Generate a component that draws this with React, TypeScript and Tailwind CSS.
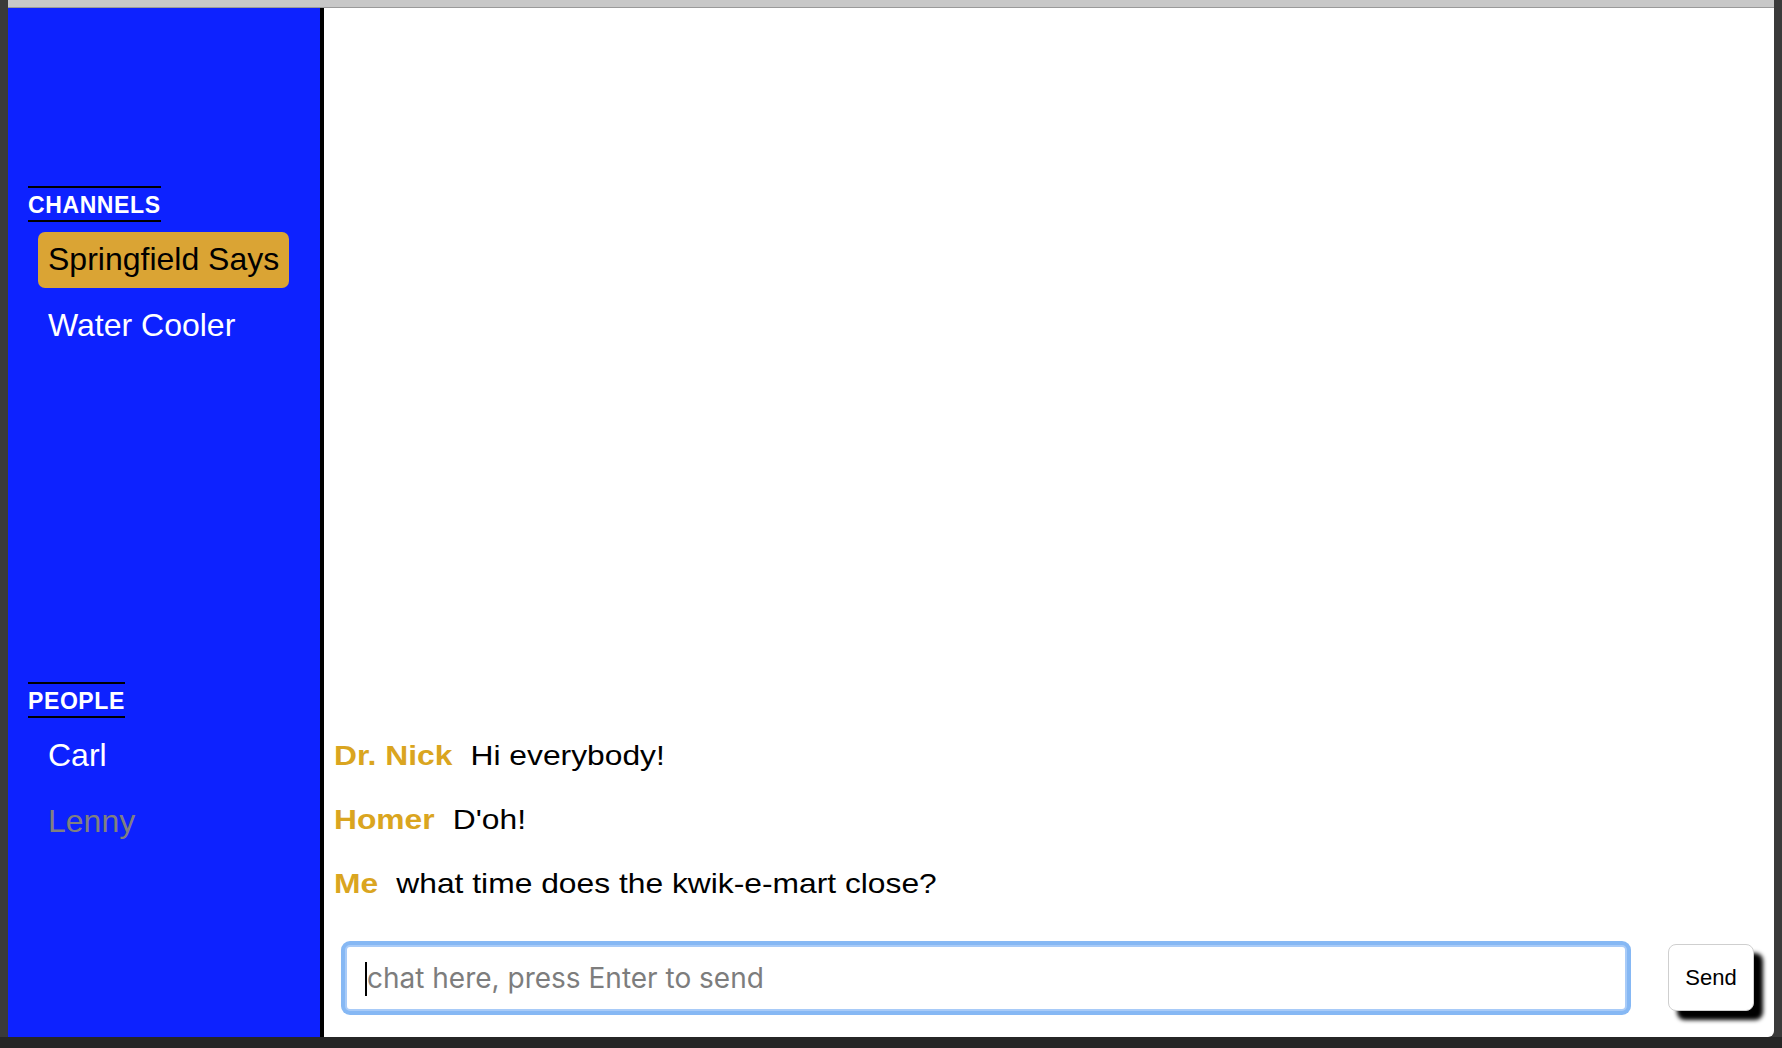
import React from 'react';

const channels = [
  { name: 'Springfield Says', active: true },
  { name: 'Water Cooler', active: false },
];

const people = [
  { name: 'Carl', online: true },
  { name: 'Lenny', online: false },
];

const messages = [
  { from: 'Dr. Nick', text: 'Hi everybody!' },
  { from: 'Homer', text: "D'oh!" },
  { from: 'Me', text: 'what time does the kwik-e-mart close?' },
];

function SectionHeading({ label }: { label: string }) {
  return (
    <div className="ml-[20px] self-start border-y-2 border-black pt-[3px] text-[23px] font-bold uppercase leading-[29px] tracking-[0.6px] text-white">
      {label}
    </div>
  );
}

function Sidebar() {
  return (
    <div className="flex w-[316px] shrink-0 flex-col border-r-4 border-black bg-[#0d22ff] pt-[178px] font-['Liberation_Sans',Arial,sans-serif]">
      <SectionHeading label="Channels" />
      <ul className="mt-[10px] ml-[30px] flex flex-col items-start">
        {channels.map((c) => (
          <li
            key={c.name}
            className={
              c.active
                ? 'mb-[10px] rounded-[7px] bg-[#daa434] px-[10px] pt-[9px] pb-[11px] text-[32px] leading-[36px] text-black'
                : 'mb-[10px] rounded-[7px] px-[10px] pt-[9px] pb-[11px] text-[32px] leading-[36px] text-white'
            }
          >
            {c.name}
          </li>
        ))}
      </ul>

      <div className="mt-[318px] flex flex-col">
        <SectionHeading label="People" />
        <ul className="mt-[10px] ml-[30px] flex flex-col items-start">
          {people.map((p) => (
            <li
              key={p.name}
              className={
                p.online
                  ? 'mb-[10px] px-[10px] pt-[9px] pb-[11px] text-[32px] leading-[36px] text-white'
                  : 'mb-[10px] px-[10px] pt-[9px] pb-[11px] text-[32px] leading-[36px] text-[#808080]'
              }
            >
              {p.name}
            </li>
          ))}
        </ul>
      </div>
    </div>
  );
}

function ChatPane() {
  return (
    <div className="flex min-w-0 flex-1 flex-col justify-end overflow-hidden rounded-br-[6px] bg-white">
      {/* the original face is a bit wider than Arial at this height */}
      <div className="flex flex-col items-start pl-[10px] font-['Liberation_Sans',Arial,sans-serif] text-[28px] leading-[32px]">
        {messages.map((m, i) => (
          <div key={i} className="flex origin-left scale-x-[1.135] py-[16px]">
            <span className="mr-[16px] font-bold text-[#daa520]">{m.from}</span>
            <span className="text-black">{m.text}</span>
          </div>
        ))}
      </div>

      <div className="mt-[28px] mb-[26px] flex items-center pl-[21px] pr-[20px]">
        <div className="relative flex-1">
          <input
            type="text"
            placeholder="chat here, press Enter to send"
            className="h-[66px] w-full rounded-[5px] border-2 border-[#a8cbf8] bg-white pl-[20px] font-['Inter',sans-serif] text-[28px] text-black shadow-[0_0_0_4px_#86b8f4] outline-none placeholder:text-[#7d7d7d]"
          />
          <span className="absolute top-[17px] left-[20px] h-[34px] w-[2px] bg-black" />
        </div>
        <button
          type="button"
          className="ml-[41px] h-[67px] w-[86px] shrink-0 rounded-[8px] border border-[#cfcfcf] bg-white font-['Liberation_Sans',Arial,sans-serif] text-[22px] text-black shadow-[9px_9px_4px_#000]"
        >
          Send
        </button>
      </div>
    </div>
  );
}

export default function App() {
  return (
    <div className="flex h-[1048px] w-[1782px] flex-col bg-[#262626]">
      <div className="flex h-[1037px] bg-[#3a3a3a] px-[8px]">
        <div className="flex flex-1 flex-col">
          <div className="h-[8px] shrink-0 border-b border-[#9a9a9a] bg-[#c8c8c8]" />
          <div className="flex flex-1">
            <Sidebar />
            <ChatPane />
          </div>
        </div>
      </div>
    </div>
  );
}
